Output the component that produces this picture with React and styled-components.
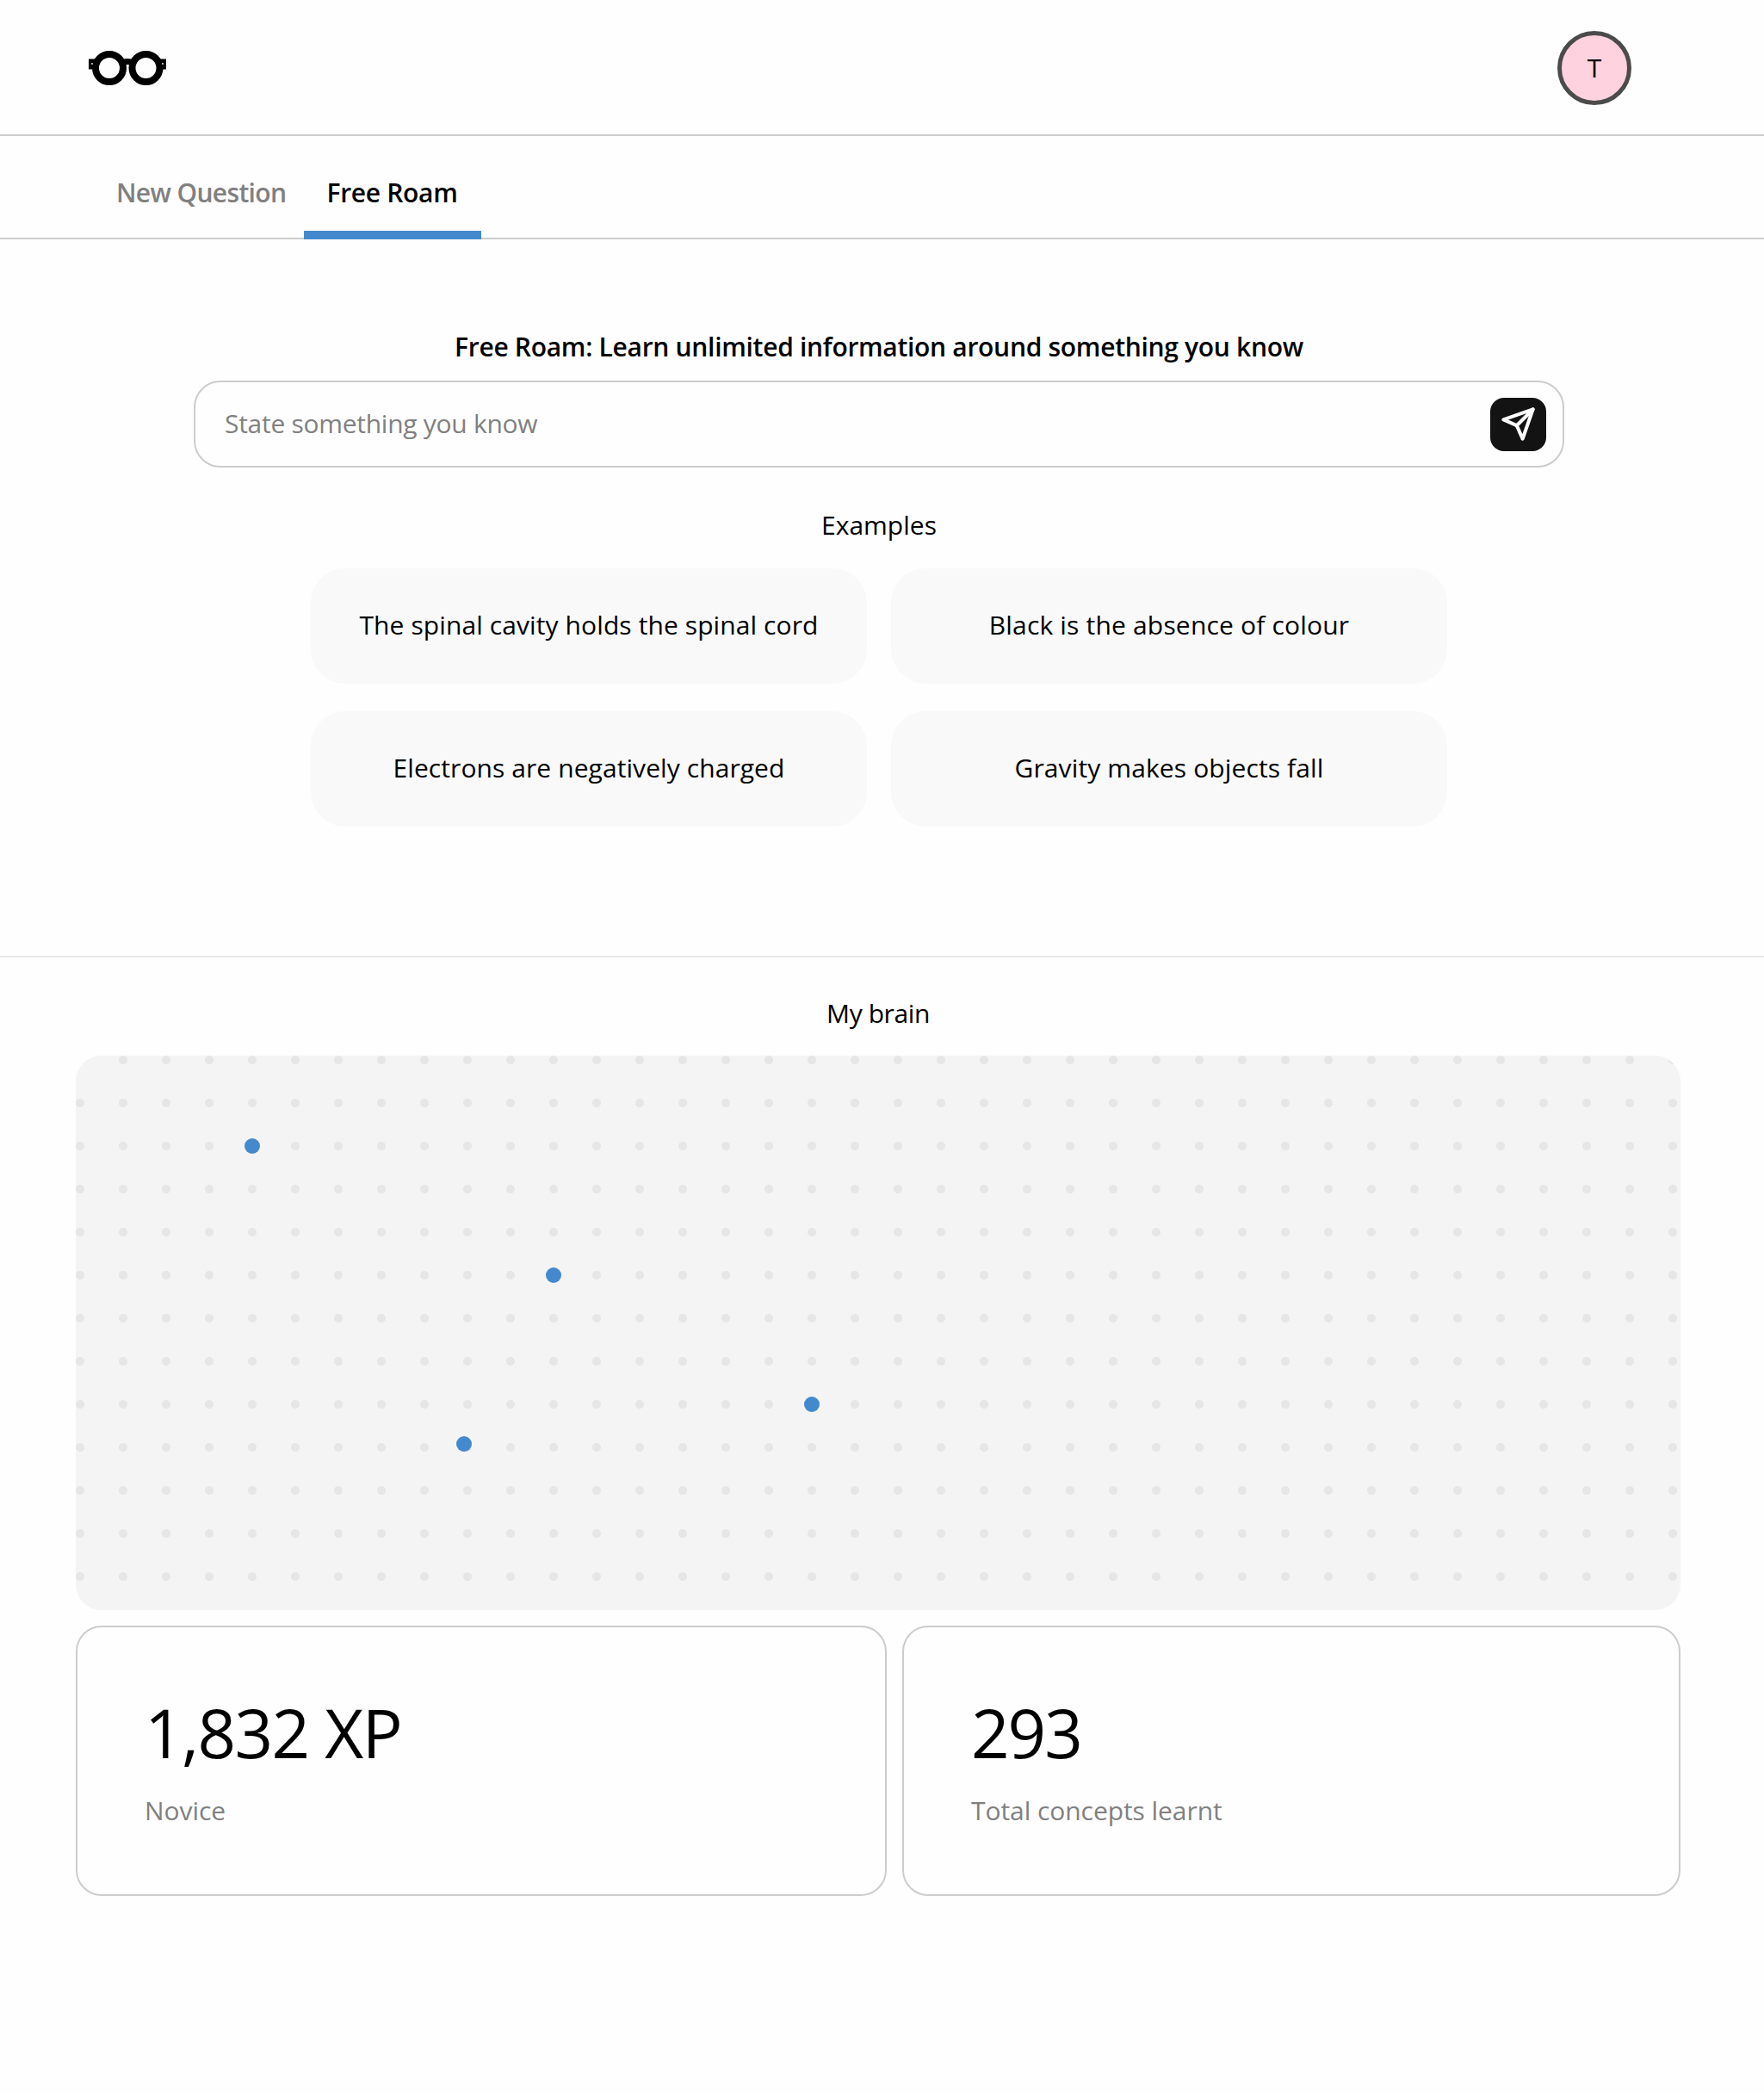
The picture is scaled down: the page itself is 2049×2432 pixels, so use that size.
import React from "react";
import styled, { createGlobalStyle } from "styled-components";

const GlobalStyle = createGlobalStyle`
  *, *::before, *::after { box-sizing: border-box; }
  html, body { margin: 0; background: #fefefe; }
  body {
    font-family: "Open Sans", "Noto Sans", sans-serif;
    font-size: 30px;
    line-height: 40px;
    color: #000;
  }
  button, input { font: inherit; }
`;

const Page = styled.div`
  display: flex;
  flex-direction: column;
  min-height: 2432px;
`;

const Header = styled.header`
  display: flex;
  align-items: center;
  justify-content: space-between;
  height: 158px;
  padding: 0 154px 0 103px;
  border-bottom: 2px solid #ccc;
`;

const Logo = styled.svg`
  width: 90px;
  height: 40px;
  margin-top: 2px;
  display: block;
`;

const Avatar = styled.div`
  display: flex;
  align-items: center;
  justify-content: center;
  width: 86px;
  height: 86px;
  margin-top: 2px;
  border: 5px solid #4b4b4b;
  border-radius: 50%;
  background: #ffd2df;
`;

const Tabs = styled.nav`
  display: flex;
  height: 120px;
  padding-left: 110px;
  box-shadow: inset 0 -2px 0 #ccc;
`;

const Tab = styled.button`
  width: ${(p) => (p.$active ? 206 : 243)}px;
  padding: 21px 0 0;
  border: 0;
  border-bottom: 10px solid ${(p) => (p.$active ? "#4489cd" : "transparent")};
  background: none;
  color: ${(p) => (p.$active ? "#000" : "#808080")};
  font-weight: 600;
  letter-spacing: ${(p) => (p.$active ? "-0.3px" : "-0.65px")};
  text-align: ${(p) => (p.$active ? "center" : "left")};
  text-indent: ${(p) => (p.$active ? -1 : 25)}px;
  white-space: nowrap;
`;

const Ask = styled.section`
  display: flex;
  flex-direction: column;
  align-items: center;
  height: 834px;
  padding: 105px 7px 0 0;
  border-bottom: 2px solid #e7e7e7;
`;

const Title = styled.h1`
  margin: 0 0 19px;
  font-size: 30px;
  font-weight: 600;
  line-height: 40px;
  letter-spacing: -0.3px;
`;

const Field = styled.form`
  display: flex;
  align-items: center;
  width: 1592px;
  height: 101px;
  padding: 0 19px 0 34px;
  border: 2px solid #ccc;
  border-radius: 31px;
`;

const Input = styled.input`
  flex: 1;
  height: 60px;
  padding: 0 0 2px;
  border: 0;
  outline: 0;
  background: none;
  letter-spacing: -0.28px;
  &::placeholder { color: #808080; opacity: 1; }
`;

const SendButton = styled.button`
  display: flex;
  align-items: center;
  justify-content: center;
  width: 65px;
  height: 62px;
  padding: 0;
  border: 0;
  border-radius: 16px;
  background: #131313;
`;

const Caption = styled.h2`
  margin: 0;
  font-size: 30px;
  font-weight: 400;
  line-height: 40px;
  letter-spacing: ${(p) => p.$tracking || 0}px;
  text-align: center;
`;

const Examples = styled.div`
  display: flex;
  flex-direction: column;
  align-items: center;
  gap: 30px;
  margin-top: 47px;
`;

const ExampleGrid = styled.div`
  display: grid;
  grid-template-columns: 646px 646px;
  grid-auto-rows: 134px;
  gap: 32px 28px;
`;

const Example = styled.button`
  padding: 0 0 2px;
  border: 0;
  border-radius: 40px;
  background: #f9f9f9;
  color: #000;
  letter-spacing: ${(p) => p.$tracking}px;
`;

const Brain = styled.section`
  display: flex;
  flex-direction: column;
  width: 1864px;
  margin-left: 88px;
  padding-top: 45px;
`;

const BrainMap = styled.div`
  position: relative;
  height: 644px;
  margin: 29px 0 18px;
  border-radius: 30px;
  overflow: hidden;
  background: #f4f4f4 radial-gradient(circle at 5px 5px, #e6e6e6 4.6px, #e6e6e600 5.4px) 0 0 / 50px 50px;
`;

const Concept = styled.i`
  position: absolute;
  left: ${(p) => p.$x}px;
  top: ${(p) => p.$y}px;
  width: 18px;
  height: 18px;
  margin: -9px;
  border-radius: 50%;
  background: #4489cd;
`;

const Stats = styled.div`
  display: grid;
  grid-template-columns: 942px 904px;
  gap: 18px;
`;

const Stat = styled.article`
  height: 314px;
  padding: 72px 78px;
  border: 2px solid #ccc;
  border-radius: 30px;
`;

const StatValue = styled.div`
  font-size: 78px;
  line-height: 100px;
  letter-spacing: ${(p) => p.$tracking}px;
`;

const StatLabel = styled.div`
  margin-top: 21px;
  color: #808080;
  letter-spacing: -0.06px;
`;

const examples = [
  { text: "The spinal cavity holds the spinal cord", tracking: 0.1 },
  { text: "Black is the absence of colour", tracking: 0.18 },
  { text: "Electrons are negatively charged", tracking: 0.08 },
  { text: "Gravity makes objects fall", tracking: 0.12 },
];

const concepts = [
  { x: 205, y: 105 },
  { x: 555, y: 255 },
  { x: 855, y: 405 },
  { x: 451, y: 451 },
];

const stats = [
  { value: "1,832 XP", label: "Novice", tracking: -1.6 },
  { value: "293", label: "Total concepts learnt", tracking: -2 },
];

function GlassesLogo() {
  return (
    <Logo viewBox="0 0 90 40" aria-label="Glasses">
      <path d="M0 9.5h10v12H0zM80 9.5h10v12H80zM37 11q8-4 16 0v6q-8-2-16 0z" />
      <circle cx="24" cy="20" r="16" fill="none" stroke="#000" strokeWidth="8" />
      <circle cx="66.5" cy="20" r="16" fill="none" stroke="#000" strokeWidth="8" />
      <circle cx="4" cy="15" r="0.9" fill="#fff" />
      <circle cx="86" cy="15" r="0.9" fill="#fff" />
    </Logo>
  );
}

function SendIcon() {
  return (
    <svg width="41" height="41" viewBox="0 0 24 24" fill="none" stroke="#fff" strokeWidth="2.4" strokeLinecap="round" strokeLinejoin="round">
      <path d="M22 2 11 13" />
      <path d="m22 2-7 20-4-9-9-4Z" />
    </svg>
  );
}

export default function App() {
  return (
    <Page>
      <GlobalStyle />
      <Header>
        <GlassesLogo />
        <Avatar>T</Avatar>
      </Header>
      <Tabs>
        <Tab>New Question</Tab>
        <Tab $active>Free Roam</Tab>
      </Tabs>
      <Ask>
        <Title>Free Roam: Learn unlimited information around something you know</Title>
        <Field>
          <Input placeholder="State something you know" />
          <SendButton type="button" aria-label="Send">
            <SendIcon />
          </SendButton>
        </Field>
        <Examples>
          <Caption>Examples</Caption>
          <ExampleGrid>
            {examples.map((e) => (
              <Example key={e.text} $tracking={e.tracking}>{e.text}</Example>
            ))}
          </ExampleGrid>
        </Examples>
      </Ask>
      <Brain>
        <Caption $tracking={-0.4}>My brain</Caption>
        <BrainMap>
          {concepts.map((c) => (
            <Concept key={c.x} $x={c.x} $y={c.y} />
          ))}
        </BrainMap>
        <Stats>
          {stats.map((s) => (
            <Stat key={s.label}>
              <StatValue $tracking={s.tracking}>{s.value}</StatValue>
              <StatLabel>{s.label}</StatLabel>
            </Stat>
          ))}
        </Stats>
      </Brain>
    </Page>
  );
}
